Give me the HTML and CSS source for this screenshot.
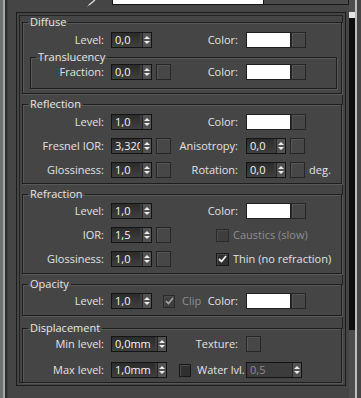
FILE: index.html
```html
<!DOCTYPE html>
<html lang="en">
<head>
    <meta charset="UTF-8">
    <meta name="viewport" content="width=device-width, initial-scale=1.0">
    <title>Basic options</title>
<link rel="stylesheet" href="styles.css">
</head>
<body>
    <div class="window">
        <div class="edge"></div>
        <div class="main">
            <div class="top">
                <svg class="pick" width="9" height="7" viewBox="0 0 9 7">
                    <path d="M8 0 L2 5" stroke="#d8d8d8" stroke-width="1.4" fill="none"/>
                    <path d="M2 5 L0.5 6.5" stroke="#9a9a9a" stroke-width="1" fill="none"/>
                </svg>
                <div class="namebox"></div>
                <div class="typebox"></div>
            </div>
            <div class="rollout">
                <fieldset class="group diffuse">
                    <legend>Diffuse</legend>
                    <div class="row">
                        <span class="lbl">Level:</span>
                        <div class="mid">
                            <div class="spin"><span class="val">0,0</span><span class="arr"></span></div>
                            <span class="lbl2">Color:</span>
                        </div>
                        <div class="swatch"></div><div class="map"></div>
                    </div>
                    <fieldset class="group sub">
                        <legend>Translucency</legend>
                        <div class="row">
                            <span class="lbl">Fraction:</span>
                            <div class="mid">
                                <div class="spin"><span class="val">0,0</span><span class="arr"></span></div>
                                <div class="map"></div>
                                <span class="lbl2">Color:</span>
                            </div>
                            <div class="swatch"></div><div class="map"></div>
                        </div>
                    </fieldset>
                </fieldset>

                <fieldset class="group refl">
                    <legend>Reflection</legend>
                    <div class="row">
                        <span class="lbl">Level:</span>
                        <div class="mid">
                            <div class="spin"><span class="val">1,0</span><span class="arr"></span></div>
                            <span class="lbl2">Color:</span>
                        </div>
                        <div class="swatch"></div><div class="map"></div>
                    </div>
                    <div class="row">
                        <span class="lbl">Fresnel IOR:</span>
                        <div class="mid">
                            <div class="spin"><span class="val">3,320</span><span class="arr"></span></div>
                            <div class="map"></div>
                            <span class="lbl2">Anisotropy:</span>
                        </div>
                        <div class="spin small"><span class="val">0,0</span><span class="arr"></span></div>
                        <div class="map gap"></div>
                    </div>
                    <div class="row">
                        <span class="lbl">Glossiness:</span>
                        <div class="mid">
                            <div class="spin"><span class="val">1,0</span><span class="arr"></span></div>
                            <div class="map"></div>
                            <span class="lbl2">Rotation:</span>
                        </div>
                        <div class="spin small"><span class="val">0,0</span><span class="arr"></span></div>
                        <div class="map gap"></div>
                        <span class="unit">deg.</span>
                    </div>
                </fieldset>

                <fieldset class="group refr">
                    <legend>Refraction</legend>
                    <div class="row">
                        <span class="lbl">Level:</span>
                        <div class="mid">
                            <div class="spin"><span class="val">1,0</span><span class="arr"></span></div>
                            <span class="lbl2">Color:</span>
                        </div>
                        <div class="swatch"></div><div class="map"></div>
                    </div>
                    <div class="row">
                        <span class="lbl">IOR:</span>
                        <div class="mid">
                            <div class="spin"><span class="val">1,5</span><span class="arr"></span></div>
                            <div class="map"></div>
                            <label class="opt refr-opt off"><span class="check"></span>Caustics (slow)</label>
                        </div>
                    </div>
                    <div class="row">
                        <span class="lbl">Glossiness:</span>
                        <div class="mid">
                            <div class="spin"><span class="val">1,0</span><span class="arr"></span></div>
                            <div class="map"></div>
                            <label class="opt refr-opt"><span class="check on"><svg width="9" height="8" viewBox="0 0 9 8"><path d="M1 4 L3.5 6.5 L8 1" stroke="#f2f2f2" stroke-width="1.8" fill="none"/></svg></span>Thin (no refraction)</label>
                        </div>
                    </div>
                </fieldset>

                <fieldset class="group opac">
                    <legend>Opacity</legend>
                    <div class="row">
                        <span class="lbl">Level:</span>
                        <div class="mid">
                            <div class="spin"><span class="val">1,0</span><span class="arr"></span></div>
                            <label class="opt clip off"><span class="check on"><svg width="9" height="8" viewBox="0 0 9 8"><path d="M1 4 L3.5 6.5 L8 1" stroke="#a8a8a8" stroke-width="1.6" fill="none"/></svg></span>Clip</label>
                            <span class="lbl2">Color:</span>
                        </div>
                        <div class="swatch"></div><div class="map"></div>
                    </div>
                </fieldset>

                <fieldset class="group disp">
                    <legend>Displacement</legend>
                    <div class="row">
                        <span class="lbl">Min level:</span>
                        <div class="mid">
                            <div class="spin wide"><span class="val">0,0mm</span><span class="arr"></span></div>
                            <span class="lbl2">Texture:</span>
                        </div>
                        <div class="map"></div>
                    </div>
                    <div class="row">
                        <span class="lbl">Max level:</span>
                        <div class="mid">
                            <div class="spin wide"><span class="val">1,0mm</span><span class="arr"></span></div>
                            <label class="opt water"><span class="check"></span>Water lvl.</label>
                        </div>
                        <div class="spin wide dim"><span class="val">0,5</span><span class="arr"></span></div>
                    </div>
                </fieldset>
            </div>
        </div>
        <div class="scroll">
            <div class="track">
                <div class="thumb"></div>
                <div class="bar"></div>
            </div>
            <div class="rail"></div>
        </div>
    </div>
</body>
</html>
```

FILE: styles.css
```css
body {
    margin: 0;
    background: #454545;
    font-family: "Open Sans", "Liberation Sans", sans-serif;
    font-size: 11px;
    color: #e2e2e2;
}

.window {
    display: flex;
    width: 361px;
    height: 398px;
    overflow: hidden;
}

.edge {
    width: 8px;
    flex: none;
    background: linear-gradient(to right, #6e726f 0, #6e726f 3px, #a3a9a6 3px, #a3a9a6 5px, #2c2c2c 5px, #2c2c2c 7px, #3c3c3c 7px);
}

.main {
    width: 338px;
    flex: none;
}

/* cut-off header row */
.top {
    height: 12px;
    display: flex;
    align-items: flex-start;
}

.pick {
    margin-left: 79px;
    flex: none;
}

.namebox {
    margin-left: 16px;
    width: 150px;
    height: 4px;
    background: #fff;
    border: 1px solid #151515;
    border-top: none;
    flex: none;
}

.typebox {
    width: 84px;
    height: 4px;
    background: #4a4a4a;
    border-bottom: 1px solid #1a1a1a;
    border-right: 1px solid #1a1a1a;
    flex: none;
}

.rollout {
    margin-left: 8px;
    width: 330px;
    box-sizing: border-box;
    border: 1px solid #1c1c1c;
    box-shadow: inset 0 0 0 2px #454545, inset 0 0 0 3px #232323;
    padding: 3px 3px 2px 5px;
}

/* group boxes */
.group {
    margin: 0;
    padding: 4px 0 5px;
    min-width: 0;
    border: 1px solid #1e1e1e;
    box-shadow: inset 1px 1px 0 #585858, 1px 1px 0 #585858;
}

.group legend {
    margin-left: 5px;
    padding: 0 2px;
    line-height: 12px;
    color: #e6e6e6;
}

.diffuse {
    padding: 4px 0 4px;
}

.sub {
    margin: 3px 4px 0 7px;
    padding: 1px 0 8px;
}

.refl {
    margin-top: 4px;
    padding: 4px 0 5px;
}

.refr {
    margin-top: 4px;
    padding: 3px 0 6px;
}

.opac {
    margin-top: 4px;
    padding: 3px 0 6px;
}

.disp {
    margin-top: 6px;
    padding: 2px 0 4px;
}

/* rows */
.row {
    display: flex;
    align-items: center;
    height: 16px;
    line-height: 16px;
}

.row + .row {
    margin-top: 8px;
}

.disp .row + .row {
    margin-top: 10px;
}

.lbl {
    width: 88px;
    padding-right: 7px;
    box-sizing: border-box;
    text-align: right;
    white-space: nowrap;
    flex: none;
}

.sub .lbl {
    width: 80px;
}

.mid {
    width: 135px;
    height: 16px;
    display: flex;
    align-items: center;
    flex: none;
}

.lbl2 {
    margin-left: auto;
    padding-right: 8px;
    white-space: nowrap;
}

/* spinner */
.spin {
    display: flex;
    width: 41px;
    height: 16px;
    box-sizing: border-box;
    border: 1px solid #141414;
    background: #3d3d3d;
    flex: none;
}

.spin.wide {
    width: 56px;
}

.spin.small {
    width: 40px;
}

.val {
    flex: 1;
    min-width: 0;
    margin-right: 2px;
    padding-left: 3px;
    line-height: 14px;
    color: #f4f4f4;
    overflow: hidden;
    white-space: nowrap;
    background: linear-gradient(#2b2b2b, #3f3f3f);
}

.spin.dim .val {
    color: #8c8c8c;
    background: #3c3c3c;
}

.arr {
    width: 8px;
    flex: none;
    border-left: 1px solid #262626;
    background: #525252;
    display: flex;
    flex-direction: column;
    align-items: center;
    justify-content: space-evenly;
}

.arr::before,
.arr::after {
    content: "";
    border-left: 3px solid transparent;
    border-right: 3px solid transparent;
}

.arr::before {
    border-bottom: 3px solid #ececec;
}

.arr::after {
    border-top: 3px solid #ececec;
}

/* map button and colour swatch */
.map {
    width: 15px;
    height: 16px;
    box-sizing: border-box;
    border: 1px solid #262626;
    background: #474747;
    box-shadow: inset 1px 1px 0 #555;
    flex: none;
}

.mid .map,
.map.gap {
    margin-left: 4px;
}

.swatch {
    width: 45px;
    height: 16px;
    box-sizing: border-box;
    background: #fff;
    border: 1px solid #202020;
    flex: none;
}

.unit {
    margin-left: 4px;
}

/* checkboxes */
.opt {
    display: flex;
    align-items: center;
    white-space: nowrap;
    flex: none;
}

.check {
    width: 13px;
    height: 13px;
    box-sizing: border-box;
    border: 1px solid #181818;
    background: #303030;
    box-shadow: inset 1px 1px 0 #4a4a4a;
    display: flex;
    align-items: center;
    justify-content: center;
    margin-right: 4px;
    flex: none;
}

.refr-opt {
    margin-left: 45px;
}

.clip {
    margin-left: 11px;
}

.clip .check {
    width: 12px;
    margin-right: 7px;
}

.water {
    margin-left: 12px;
}

.water .check {
    width: 12px;
    margin-right: 6px;
}

.off {
    color: #8e8e8e;
}

.off .check {
    border-color: #2a2a2a;
    background: #3e3e3e;
}

/* scrollbar */
.scroll {
    width: 15px;
    flex: none;
    display: flex;
}

.track {
    width: 6px;
    margin-left: 3px;
    display: flex;
    flex-direction: column;
    background: #4d4d4d;
}

.thumb {
    margin-top: 12px;
    height: 6px;
    background: #e4e4e4;
}

.bar {
    height: 312px;
    background: #0e0e0e;
}

.rail {
    width: 2px;
    background: #bdbdbd;
}
```
